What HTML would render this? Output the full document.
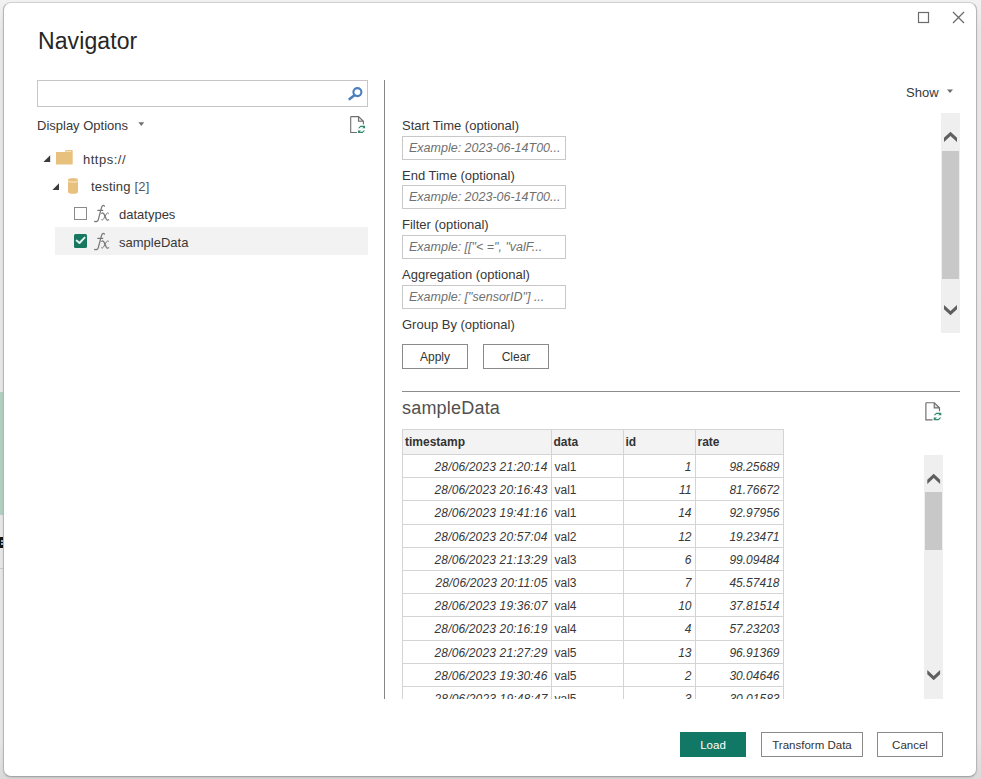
<!DOCTYPE html>
<html><head><meta charset="utf-8">
<style>
*{margin:0;padding:0;box-sizing:border-box}
html,body{width:981px;height:779px;overflow:hidden;background:#e6e6e6;font-family:"Liberation Sans",sans-serif;color:#252423}
.a{position:absolute}
#bg{left:0;top:0;width:981px;height:779px;background:linear-gradient(#f1f1f1 0,#f1f1f1 2px,#e7e7e7 30px,#e6e6e6 740px,#dadada 779px)}
#dlg{left:3px;top:2px;width:974px;height:775px;background:#fff;border:1px solid #b6b6b6;border-top-color:#d0d0d0;border-bottom-color:#a6a6a6;border-radius:8px;box-shadow:0 1px 2px rgba(0,0,0,.12)}
.t{position:absolute;white-space:nowrap;font-size:13px;line-height:15px;color:#383838}
.inp{position:absolute;left:402px;width:164px;height:24px;border:1px solid #c8c8c8;background:#fff}
.ph{position:absolute;left:6px;top:4px;font-style:italic;color:#707070;font-size:12.5px;line-height:15px;white-space:nowrap}
.btn{position:absolute;border:1px solid #8a8a8a;background:#fff;font-size:13px;line-height:23px;text-align:center;color:#333}
.sb{position:absolute;background:#efefef}
.th{position:absolute;background:#c8c8c8}
table{position:absolute;border-collapse:collapse;font-size:12px}
td,th{color:#383838;border:1px solid #d4d4d4;height:23.2px;padding:0 3px;white-space:nowrap;line-height:14px}
th{background:#f3f3f3;font-weight:bold;color:#333;text-align:left;height:25px;padding-left:2px}
td{font-style:italic;text-align:right;padding-top:2px}
td.n{font-style:normal;text-align:left}
tr td:first-child{letter-spacing:0.15px}
</style></head><body>
<div class="a" id="bg"></div>
<!-- left background bits -->
<div class="a" style="left:0;top:392px;width:4px;height:123px;background:#b0cfbf"></div>
<div class="a" style="left:0;top:537px;width:3px;height:11px;background:#151515"></div><div class="a" style="left:1px;top:540px;width:2px;height:2px;background:#7fb6e6"></div><div class="a" style="left:1px;top:543px;width:2px;height:2px;background:#7fb6e6"></div><div class="a" style="left:0;top:568px;width:3px;height:1px;background:#c8c8c8"></div>
<div class="a" id="dlg"></div>

<!-- title -->
<div class="t" style="left:38px;top:28px;font-size:23px;line-height:26px;letter-spacing:0.1px;color:#262626">Navigator</div>

<!-- window controls -->
<svg class="a" style="left:910px;top:5px" width="65" height="25">
 <rect x="8.5" y="7.5" width="10" height="10" fill="none" stroke="#6b6b6b" stroke-width="1.2"/>
 <path d="M43 7 L54 18 M54 7 L43 18" stroke="#6b6b6b" stroke-width="1.3"/>
</svg>


<!-- search -->
<div class="a" style="left:37px;top:80px;width:331px;height:27px;border:1px solid #c6c6c6"></div>
<svg class="a" style="left:346px;top:84px" width="20" height="18">
 <circle cx="11.4" cy="8.1" r="4" fill="none" stroke="#4b7fbe" stroke-width="2.1"/>
 <path d="M8.4 11.2 L3.6 15" stroke="#4b7fbe" stroke-width="2.6" stroke-linecap="round"/>
</svg>
<div class="t" style="left:37px;top:118px">Display Options</div>
<svg class="a" style="left:136px;top:120px" width="10" height="8"><path d="M2.4 2.3 L8.2 2.3 L5.3 5.9Z" fill="#707070"/></svg>
<!-- refresh doc icon -->
<svg class="a" style="left:348px;top:114px" width="22" height="24"><g transform="scale(1)">
 <path d="M10.5 2.6 V7.3 H15.4Z" fill="#e2e2e2"/>
 <path d="M2.7 2.6 H10.6 L15.4 7.3 V10.6 M2.7 2.6 V18.5 H8.9 M10.5 2.6 V7.3 H15.4" fill="none" stroke="#6e6e6e" stroke-width="1.1"/>
 <path d="M10 14.3 L12.4 11.8 H17.1 V14.3 H14 L15.5 13 H12.8 L11.4 14.3Z M17.1 16.4 L14.7 18.9 H10 V16.4 H13.1 L11.6 17.7 H14.3 L15.7 16.4Z" fill="#2f8a68"/>
</g></svg>
<!-- tree -->
<svg class="a" style="left:42px;top:154px" width="10" height="10"><path d="M8.2 1.3 V8 H1.4Z" fill="#3b3b3b"/></svg>
<svg class="a" style="left:55px;top:149px" width="19" height="17">
 <path d="M1 3.1 H10.2 V1.6 Q10.2 1 10.8 1 H17.2 Q17.7 1 17.7 1.6 V15.4 H1Z" fill="#e8c17f"/>
 <rect x="11" y="1.9" width="5.2" height="0.9" fill="#f6e6c6"/>
</svg>
<div class="t" style="left:83px;top:152px;letter-spacing:0.5px">https://</div>
<svg class="a" style="left:51px;top:182px" width="10" height="10"><path d="M8 1.3 V8 H1.4Z" fill="#3b3b3b"/></svg>
<svg class="a" style="left:66px;top:177px" width="14" height="18">
 <path d="M2 2.6 Q2 1 7 1 Q12 1 12 2.6 V15 Q12 16.8 7 16.8 Q2 16.8 2 15Z" fill="#e8c17f"/>
 <path d="M2 3.4 Q7 5.4 12 3.4 V4.9 Q7 6.9 2 4.9Z" fill="#f3dcb2"/>
</svg>
<div class="t" style="left:91px;top:179px;letter-spacing:0.2px">testing <span style="color:#555">[2]</span></div>
<div class="a" style="left:74px;top:207px;width:13px;height:13px;border:1px solid #8a8a8a;background:#fff"></div>
<svg class="a" style="left:92px;top:203px" width="19" height="21"><g fill="none" stroke="#787878" stroke-linecap="round">
 <path d="M12.4 3 C11.4 2 10 2.4 9.5 4.6 L6.3 16.6 C5.8 18.5 4.4 19 2.6 18.4" stroke-width="1.25"/>
 <path d="M5.8 7.4 H10.8" stroke-width="1.1"/>
 <path d="M9.8 10.3 C10.7 9.7 11.4 9.9 12 11 L14.3 16.2 C14.8 17.2 15.6 17.4 16.6 16.8" stroke-width="1.3"/>
 <path d="M16.6 10.3 C15.9 9.7 15.3 9.9 14.6 10.6 L11.6 15.8 C10.9 17 10.2 17.4 9.5 16.8" stroke-width="1.0"/>
</g></svg>
<div class="t" style="left:119px;top:207px">datatypes</div>
<div class="a" style="left:55px;top:227px;width:313px;height:28px;background:#f2f2f2"></div>
<svg class="a" style="left:74px;top:234px" width="13" height="14"><rect x="0" y="0" width="13" height="14" rx="1.5" fill="#17785f"/><path d="M2.6 6.6 L5.5 9 L10.6 3.6" fill="none" stroke="#e8f3ef" stroke-width="1.9" stroke-linecap="round" stroke-linejoin="round"/></svg>
<svg class="a" style="left:92px;top:231px" width="19" height="21"><g fill="none" stroke="#787878" stroke-linecap="round">
 <path d="M12.4 3 C11.4 2 10 2.4 9.5 4.6 L6.3 16.6 C5.8 18.5 4.4 19 2.6 18.4" stroke-width="1.25"/>
 <path d="M5.8 7.4 H10.8" stroke-width="1.1"/>
 <path d="M9.8 10.3 C10.7 9.7 11.4 9.9 12 11 L14.3 16.2 C14.8 17.2 15.6 17.4 16.6 16.8" stroke-width="1.3"/>
 <path d="M16.6 10.3 C15.9 9.7 15.3 9.9 14.6 10.6 L11.6 15.8 C10.9 17 10.2 17.4 9.5 16.8" stroke-width="1.0"/>
</g></svg>
<div class="t" style="left:119px;top:235px">sampleData</div>
<!-- divider -->
<div class="a" style="left:384px;top:80px;width:1px;height:619px;background:#858585"></div>

<!-- right panel -->
<div class="t" style="left:906px;top:85px;font-size:13px">Show</div>
<svg class="a" style="left:945px;top:87px" width="10" height="8"><path d="M2 2.5 L8 2.5 L5 6Z" fill="#6b6b6b"/></svg>

<div class="t" style="left:402px;top:118px">Start Time (optional)</div>
<div class="inp" style="top:136px"><div class="ph">Example: 2023-06-14T00...</div></div>
<div class="t" style="left:402px;top:168px">End Time (optional)</div>
<div class="inp" style="top:185px"><div class="ph">Example: 2023-06-14T00...</div></div>
<div class="t" style="left:402px;top:217px">Filter (optional)</div>
<div class="inp" style="top:235px"><div class="ph">Example: [["&lt; =", "valF...</div></div>
<div class="t" style="left:402px;top:267px">Aggregation (optional)</div>
<div class="inp" style="top:285px"><div class="ph">Example: ["sensorID"] ...</div></div>
<div class="t" style="left:402px;top:317px">Group By (optional)</div>
<div class="btn" style="left:402px;top:344px;width:66px;height:25px;font-size:12px;line-height:24px">Apply</div>
<div class="btn" style="left:483px;top:344px;width:66px;height:25px;font-size:12px;line-height:24px">Clear</div>

<div class="sb" style="left:941px;top:113px;width:19px;height:220px"></div>
<div class="th" style="left:942px;top:151px;width:17px;height:128px"></div>
<svg class="a" style="left:941px;top:113px" width="19" height="220">
 <path d="M3 24.8 L9.5 18.8 L16 24.8 L16 29 L9.5 23 L3 29Z" fill="#5f5f5f"/>
 <path d="M3 192 L9.5 198 L16 192 L16 196.2 L9.5 202.2 L3 196.2Z" fill="#5f5f5f"/>
</svg>

<div class="a" style="left:402px;top:391px;width:558px;height:1px;background:#8c8c8c"></div>
<div class="t" style="left:402px;top:398px;font-size:18px;line-height:20px;color:#505050;letter-spacing:0.2px">sampleData</div>
<svg class="a" style="left:923px;top:400px" width="22" height="24"><g transform="scale(1.07)">
 <path d="M10.5 2.6 V7.3 H15.4Z" fill="#e2e2e2"/>
 <path d="M2.7 2.6 H10.6 L15.4 7.3 V10.6 M2.7 2.6 V18.5 H8.9 M10.5 2.6 V7.3 H15.4" fill="none" stroke="#6e6e6e" stroke-width="1.1"/>
 <path d="M10 14.3 L12.4 11.8 H17.1 V14.3 H14 L15.5 13 H12.8 L11.4 14.3Z M17.1 16.4 L14.7 18.9 H10 V16.4 H13.1 L11.6 17.7 H14.3 L15.7 16.4Z" fill="#2f8a68"/>
</g></svg>

<div class="sb" style="left:924px;top:455px;width:19px;height:244px"></div>
<div class="th" style="left:925px;top:492px;width:17px;height:58px"></div>
<svg class="a" style="left:924px;top:455px" width="19" height="244">
 <path d="M3.3 24.8 L9.7 18.8 L16.1 24.8 L16.1 29 L9.7 23 L3.3 29Z" fill="#5f5f5f"/>
 <path d="M3.3 215 L9.7 221 L16.1 215 L16.1 219.2 L9.7 225.2 L3.3 219.2Z" fill="#5f5f5f"/>
</svg>

<div class="a" style="left:402px;top:429px;width:400px;height:270px;overflow:hidden">
<table style="left:0;top:0">
<colgroup><col style="width:148.5px"><col style="width:72px"><col style="width:72px"><col style="width:88px"></colgroup>
<tr><th>timestamp</th><th>data</th><th>id</th><th>rate</th></tr>
<tr><td>28/06/2023 21:20:14</td><td class="n">val1</td><td>1</td><td>98.25689</td></tr>
<tr><td>28/06/2023 20:16:43</td><td class="n">val1</td><td>11</td><td>81.76672</td></tr>
<tr><td>28/06/2023 19:41:16</td><td class="n">val1</td><td>14</td><td>92.97956</td></tr>
<tr><td>28/06/2023 20:57:04</td><td class="n">val2</td><td>12</td><td>19.23471</td></tr>
<tr><td>28/06/2023 21:13:29</td><td class="n">val3</td><td>6</td><td>99.09484</td></tr>
<tr><td>28/06/2023 20:11:05</td><td class="n">val3</td><td>7</td><td>45.57418</td></tr>
<tr><td>28/06/2023 19:36:07</td><td class="n">val4</td><td>10</td><td>37.81514</td></tr>
<tr><td>28/06/2023 20:16:19</td><td class="n">val4</td><td>4</td><td>57.23203</td></tr>
<tr><td>28/06/2023 21:27:29</td><td class="n">val5</td><td>13</td><td>96.91369</td></tr>
<tr><td>28/06/2023 19:30:46</td><td class="n">val5</td><td>2</td><td>30.04646</td></tr>
<tr><td>28/06/2023 19:48:47</td><td class="n">val5</td><td>3</td><td>30.01583</td></tr>
</table>
</div>

<!-- bottom buttons -->
<div class="btn" style="left:680px;top:732px;width:66px;height:25px;background:#117865;border-color:#117865;color:#fff;font-size:11.5px;line-height:24px">Load</div>
<div class="btn" style="left:761px;top:732px;width:102px;height:25px;font-size:11.5px;line-height:24px">Transform Data</div>
<div class="btn" style="left:877px;top:732px;width:66px;height:25px;font-size:11.5px;line-height:24px">Cancel</div>
</body></html>
